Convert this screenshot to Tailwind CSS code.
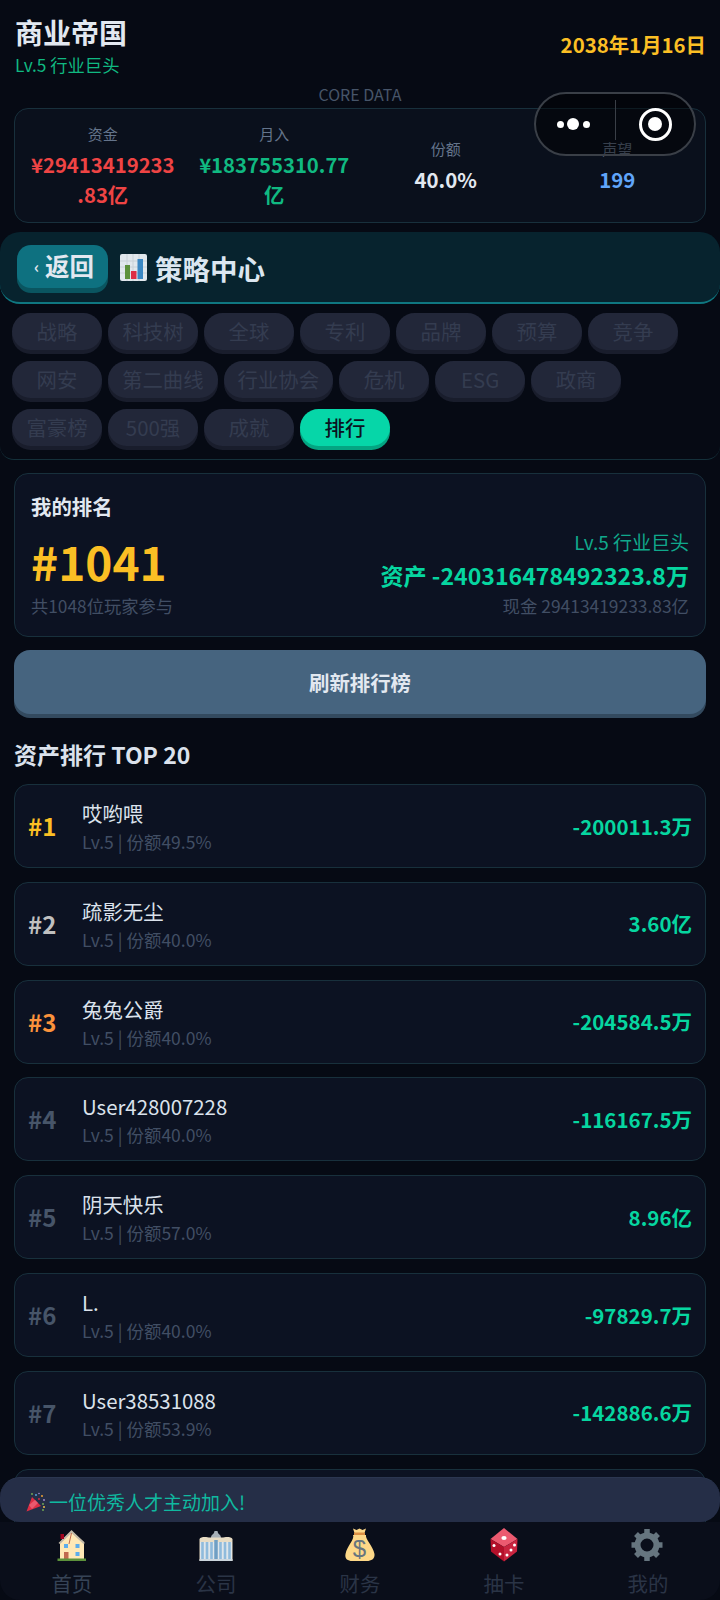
<!DOCTYPE html>
<html lang="zh">
  <head>
    <meta charset="UTF-8" />
    <meta name="viewport" content="width=device-width, initial-scale=1.0" />
    <title>商业帝国</title>
    <script src="https://cdn.jsdelivr.net/npm/@tailwindcss/browser@4"></script>
  </head>
  <body class="bg-[#060a14]">
    <div class="relative w-[720px] h-[1600px] overflow-hidden bg-[#060a14] font-['Noto_Sans_CJK_SC','Noto_Sans',sans-serif] text-[#e2e8f0]">
      <!-- 顶部 -->
      <header class="flex items-start justify-between h-[84px] pt-[13px] pl-[15px] pr-[14px]">
        <div>
          <h1 class="text-[28px] leading-[38px] font-semibold text-[#e2e8f0]">商业帝国</h1>
          <p class="mt-[2px] text-[17.3px] leading-[24px] text-[#10b981]">Lv.5 行业巨头</p>
        </div>
        <div class="mt-[17px] text-[20.4px] leading-[28px] font-semibold text-[#fbbf24]">2038年1月16日</div>
      </header>
      <p class="text-center text-[16px] leading-[20px] text-[#475569]">CORE DATA</p>

      <!-- 核心数据 -->
      <section class="mx-[14px] mt-[4px] h-[115px] grid grid-cols-4 items-center px-[2px] rounded-[14px] border border-[#18303c] bg-[#0a101c]">
        <div class="text-center">
          <p class="text-[15px] leading-[22px] text-[#64748b]">资金</p>
          <p class="text-[20.3px] leading-[30px] mt-[4px] font-semibold text-[#ef4444]">¥29413419233<br />.83亿</p>
        </div>
        <div class="text-center">
          <p class="text-[15px] leading-[22px] text-[#64748b]">月入</p>
          <p class="text-[20.3px] leading-[30px] mt-[4px] font-semibold text-[#10b981]">¥183755310.77<br />亿</p>
        </div>
        <div class="text-center">
          <p class="text-[15px] leading-[22px] text-[#64748b]">份额</p>
          <p class="text-[20.4px] leading-[30px] mt-[4px] font-semibold text-[#e2e8f0]">40.0%</p>
        </div>
        <div class="text-center">
          <p class="text-[15px] leading-[22px] text-[#64748b]">声望</p>
          <p class="text-[20.4px] leading-[30px] mt-[4px] font-semibold text-[#60a5fa]">199</p>
        </div>
      </section>

      <!-- 策略中心标题 -->
      <div class="mt-[9px] h-[72px] flex items-center gap-[12px] pl-[17px] rounded-[20px] border-b-2 border-[#0f7781] bg-[#07232e]">
        <button class="flex items-center justify-center gap-[6px] w-[91px] h-[43px] pl-[3px] mt-[-2px] rounded-[14px] bg-[#0e7180] shadow-[0_5px_0_#0a5560] text-[24.5px] font-semibold text-[#e2e8f0]"><span class="text-[16px]">‹</span>返回</button>
        <div class="flex items-center gap-[8px]">
          <svg width="27" height="27" viewBox="0 0 27 27">
            <rect width="27" height="27" rx="2" fill="#e1e8ed" />
            <path d="M0 7h27M0 13h27M0 19h27M7 0v27M13 0v27M19 0v27" stroke="#c9d2d8" stroke-width="1" />
            <rect x="5" y="11" width="5" height="14" fill="#5c913b" />
            <rect x="11" y="17" width="5.5" height="8" fill="#dd2e44" />
            <rect x="17.5" y="5" width="5.5" height="20" fill="#3b88c3" />
          </svg>
          <h2 class="pt-[3px] text-[27.5px] font-semibold text-[#dbe6f0]">策略中心</h2>
        </div>
      </div>

      <!-- 标签 -->
      <nav class="px-[12px] pt-[9px] pb-[13px] border-b border-[#14303a] rounded-b-[14px] flex flex-wrap gap-x-[6px] gap-y-[11px] text-[20.4px] leading-[37px] text-[#343c50]">
        <a class="min-w-[90px] px-[14px] text-center rounded-[19px] bg-[#222739] shadow-[0_4px_0_#191d2c]">战略</a>
        <a class="min-w-[90px] px-[14px] text-center rounded-[19px] bg-[#222739] shadow-[0_4px_0_#191d2c]">科技树</a>
        <a class="min-w-[90px] px-[14px] text-center rounded-[19px] bg-[#222739] shadow-[0_4px_0_#191d2c]">全球</a>
        <a class="min-w-[90px] px-[14px] text-center rounded-[19px] bg-[#222739] shadow-[0_4px_0_#191d2c]">专利</a>
        <a class="min-w-[90px] px-[14px] text-center rounded-[19px] bg-[#222739] shadow-[0_4px_0_#191d2c]">品牌</a>
        <a class="min-w-[90px] px-[14px] text-center rounded-[19px] bg-[#222739] shadow-[0_4px_0_#191d2c]">预算</a>
        <a class="min-w-[90px] px-[14px] text-center rounded-[19px] bg-[#222739] shadow-[0_4px_0_#191d2c]">竞争</a>
        <a class="min-w-[90px] px-[14px] text-center rounded-[19px] bg-[#222739] shadow-[0_4px_0_#191d2c]">网安</a>
        <a class="min-w-[90px] px-[14px] text-center rounded-[19px] bg-[#222739] shadow-[0_4px_0_#191d2c]">第二曲线</a>
        <a class="min-w-[90px] px-[14px] text-center rounded-[19px] bg-[#222739] shadow-[0_4px_0_#191d2c]">行业协会</a>
        <a class="min-w-[90px] px-[14px] text-center rounded-[19px] bg-[#222739] shadow-[0_4px_0_#191d2c]">危机</a>
        <a class="min-w-[90px] px-[14px] text-center rounded-[19px] bg-[#222739] shadow-[0_4px_0_#191d2c]">ESG</a>
        <a class="min-w-[90px] px-[14px] text-center rounded-[19px] bg-[#222739] shadow-[0_4px_0_#191d2c]">政商</a>
        <a class="min-w-[90px] px-[14px] text-center rounded-[19px] bg-[#222739] shadow-[0_4px_0_#191d2c]">富豪榜</a>
        <a class="min-w-[90px] px-[14px] text-center rounded-[19px] bg-[#222739] shadow-[0_4px_0_#191d2c]">500强</a>
        <a class="min-w-[90px] px-[14px] text-center rounded-[19px] bg-[#222739] shadow-[0_4px_0_#191d2c]">成就</a>
        <a class="min-w-[90px] px-[14px] text-center rounded-[19px] bg-[#06d6a8] shadow-[0_4px_0_#04a582] text-[#0b1220] font-medium">排行</a>
      </nav>

      <main class="px-[14px] pt-[13px]">
        <!-- 我的排名 -->
        <section class="h-[164px] px-[16px] pt-[18px] rounded-[14px] border border-[#18303c] bg-[#0c1222]">
          <h3 class="text-[20.4px] leading-[28px] font-semibold text-[#e2e8f0]">我的排名</h3>
          <div class="flex items-end justify-between mt-[8px]">
            <div>
              <p class="text-[46px] leading-[66px] font-bold text-[#fbbf24]">#1041</p>
              <p class="text-[17.3px] leading-[24px] text-[#414e64]">共1048位玩家参与</p>
            </div>
            <div class="text-right">
              <p class="text-[19px] leading-[24px] text-[#10a88c]">Lv.5 行业巨头</p>
              <p class="text-[23.1px] leading-[36px] mt-[3px] font-semibold text-[#06d6a0]">资产 -240316478492323.8万</p>
              <p class="text-[17.4px] leading-[24px] mt-[1px] text-[#414e64]">现金 29413419233.83亿</p>
            </div>
          </div>
        </section>

        <button class="block w-full h-[64px] mt-[13px] rounded-[16px] bg-[#46647f] shadow-[0_4px_0_#334a5f] text-[20.4px] font-semibold text-[#e2e8f0]">刷新排行榜</button>

        <h3 class="mt-[22px] text-[23px] leading-[36px] font-semibold text-[#dbe2ec]">资产排行 TOP 20</h3>

        <!-- 排行列表 -->
        <ul class="mt-[12px] flex flex-col gap-[13.8px]">
          <li class="flex items-center h-[84px] px-[13px] rounded-[14px] border border-[#18303c] bg-[#0c1222]">
            <span class="w-[54px] text-[24px] font-bold text-[#fbbf24]">#1</span>
            <div class="flex-1 pt-[3px]">
              <p class="text-[20.4px] leading-[28px] text-[#dbe2ec]">哎哟喂</p>
              <p class="text-[17.5px] leading-[29px] text-[#414e64]">Lv.5 | 份额49.5%</p>
            </div>
            <span class="text-[20.5px] font-semibold text-[#06d6a0]">-200011.3万</span>
          </li>
          <li class="flex items-center h-[84px] px-[13px] rounded-[14px] border border-[#18303c] bg-[#0c1222]">
            <span class="w-[54px] text-[24px] font-bold text-[#c0c0c0]">#2</span>
            <div class="flex-1 pt-[3px]">
              <p class="text-[20.4px] leading-[28px] text-[#dbe2ec]">疏影无尘</p>
              <p class="text-[17.5px] leading-[29px] text-[#414e64]">Lv.5 | 份额40.0%</p>
            </div>
            <span class="text-[20.5px] font-semibold text-[#06d6a0]">3.60亿</span>
          </li>
          <li class="flex items-center h-[84px] px-[13px] rounded-[14px] border border-[#18303c] bg-[#0c1222]">
            <span class="w-[54px] text-[24px] font-bold text-[#fb923c]">#3</span>
            <div class="flex-1 pt-[3px]">
              <p class="text-[20.4px] leading-[28px] text-[#dbe2ec]">兔兔公爵</p>
              <p class="text-[17.5px] leading-[29px] text-[#414e64]">Lv.5 | 份额40.0%</p>
            </div>
            <span class="text-[20.5px] font-semibold text-[#06d6a0]">-204584.5万</span>
          </li>
          <li class="flex items-center h-[84px] px-[13px] rounded-[14px] border border-[#18303c] bg-[#0c1222]">
            <span class="w-[54px] text-[24px] font-bold text-[#475569]">#4</span>
            <div class="flex-1 pt-[3px]">
              <p class="text-[20.4px] leading-[28px] text-[#dbe2ec]">User428007228</p>
              <p class="text-[17.5px] leading-[29px] text-[#414e64]">Lv.5 | 份额40.0%</p>
            </div>
            <span class="text-[20.5px] font-semibold text-[#06d6a0]">-116167.5万</span>
          </li>
          <li class="flex items-center h-[84px] px-[13px] rounded-[14px] border border-[#18303c] bg-[#0c1222]">
            <span class="w-[54px] text-[24px] font-bold text-[#475569]">#5</span>
            <div class="flex-1 pt-[3px]">
              <p class="text-[20.4px] leading-[28px] text-[#dbe2ec]">阴天快乐</p>
              <p class="text-[17.5px] leading-[29px] text-[#414e64]">Lv.5 | 份额57.0%</p>
            </div>
            <span class="text-[20.5px] font-semibold text-[#06d6a0]">8.96亿</span>
          </li>
          <li class="flex items-center h-[84px] px-[13px] rounded-[14px] border border-[#18303c] bg-[#0c1222]">
            <span class="w-[54px] text-[24px] font-bold text-[#475569]">#6</span>
            <div class="flex-1 pt-[3px]">
              <p class="text-[20.4px] leading-[28px] text-[#dbe2ec]">L.</p>
              <p class="text-[17.5px] leading-[29px] text-[#414e64]">Lv.5 | 份额40.0%</p>
            </div>
            <span class="text-[20.5px] font-semibold text-[#06d6a0]">-97829.7万</span>
          </li>
          <li class="flex items-center h-[84px] px-[13px] rounded-[14px] border border-[#18303c] bg-[#0c1222]">
            <span class="w-[54px] text-[24px] font-bold text-[#475569]">#7</span>
            <div class="flex-1 pt-[3px]">
              <p class="text-[20.4px] leading-[28px] text-[#dbe2ec]">User38531088</p>
              <p class="text-[17.5px] leading-[29px] text-[#414e64]">Lv.5 | 份额53.9%</p>
            </div>
            <span class="text-[20.5px] font-semibold text-[#06d6a0]">-142886.6万</span>
          </li>
          <li class="h-[84px] rounded-[14px] border border-[#18303c] bg-[#0c1222]"></li>
        </ul>
      </main>

      <!-- 小程序胶囊 -->
      <div class="absolute left-[534px] top-[92px] w-[162px] h-[64px] flex items-center rounded-[32px] border-2 border-[#3a3f47] bg-black/45">
        <div class="flex items-center justify-center gap-[3.5px] w-[79px] pr-[5px]">
          <span class="w-[7px] h-[7px] rounded-full bg-white"></span>
          <span class="w-[12px] h-[12px] rounded-full bg-white"></span>
          <span class="w-[7px] h-[7px] rounded-full bg-white"></span>
        </div>
        <span class="w-px h-[40px] mt-[-8px] bg-[#3a3f47]"></span>
        <div class="flex flex-1 items-center justify-center">
          <span class="flex items-center justify-center w-[33px] h-[33px] rounded-full border-[3px] border-white">
            <span class="w-[14px] h-[14px] rounded-full bg-white"></span>
          </span>
        </div>
      </div>

      <!-- 提示条 -->
      <div class="absolute left-0 right-0 top-[1477px] h-[45px] flex items-center gap-[3px] pl-[26px] rounded-[20px] border-t border-[#2b3650] bg-[#252e47] text-[19px] text-[#10b9a0]">
        <svg width="20" height="20" viewBox="0 0 20 20" class="mt-[4px]">
          <path d="M0.5 19.5 L6 5 L15 14 Z" fill="#dd2e44" />
          <path d="M3 13 L9 8 L12 11 L6 17 Z" fill="#ea596e" />
          <circle cx="6" cy="2" r="0.9" fill="#77b255" /><circle cx="10" cy="3" r="0.9" fill="#55acee" /><circle cx="13" cy="1.5" r="0.8" fill="#aa8dd8" /><circle cx="16" cy="4" r="0.9" fill="#ffac33" /><circle cx="13" cy="7" r="0.9" fill="#dd2e44" /><circle cx="18" cy="8" r="0.9" fill="#aa8dd8" /><circle cx="17" cy="12" r="0.9" fill="#77b255" /><circle cx="18" cy="15" r="0.9" fill="#ffcc4d" /><circle cx="17" cy="18" r="0.9" fill="#77b255" />
        </svg>
        <span class="mt-[4px]">一位优秀人才主动加入!</span>
      </div>

      <!-- 底部导航 -->
      <footer class="absolute left-0 right-0 top-[1522px] h-[78px] grid grid-cols-5 bg-[#0a0e1a] text-[20.4px] text-[#2a3446] rounded-b-[20px]">
        <a class="flex flex-col items-center pt-[6px] text-[#364356]">
          <svg width="34" height="34" viewBox="0 0 34 34">
            <path d="M5 14 L16.5 3 L29 14 V31 H5 Z" fill="#ffe8b6" />
            <path d="M16.5 2 L30 15 L28.5 16 L16.5 5 L5 16 L3.5 15 Z" fill="#c1b8a8" />
            <path d="M16.5 5 L14 16" stroke="#c1694f" stroke-width="1" />
            <rect x="5.5" y="6" width="3.5" height="5" fill="#a0041e" />
            <rect x="9" y="16" width="4" height="4" fill="#5dadec" />
            <rect x="20.5" y="16" width="4" height="4" fill="#5dadec" />
            <rect x="20.5" y="24" width="4" height="4" fill="#5dadec" />
            <rect x="9" y="24" width="4.5" height="7" fill="#c1694f" />
            <rect x="2.5" y="30.5" width="28.5" height="2.5" fill="#5c913b" />
          </svg>
          <span class="leading-[30px] mt-[6px]">首页</span>
        </a>
        <a class="flex flex-col items-center pt-[6px]">
          <svg width="34" height="34" viewBox="0 0 34 34">
            <path d="M12 10 C12 6 15 7 15.5 3 H18.5 C19 7 22 6 22 10 Z" fill="#a7b0b8" />
            <path d="M0.5 33 V11 C2 8 8 9 11 9.5 H23 C26 9 32 8 33.5 11 V33 Z" fill="#e8dcc4" />
            <rect x="1" y="14" width="32" height="19" fill="#dfe6ea" />
            <path d="M3.5 14v17M8 14v17M12.5 14v17M21.5 14v17M26 14v17M30.5 14v17" stroke="#8fbbdc" stroke-width="2.6" />
            <path d="M17 12v19" stroke="#6f9fc4" stroke-width="3.5" />
            <rect x="0.5" y="31" width="33" height="2" fill="#ccd6dd" />
          </svg>
          <span class="leading-[30px] mt-[6px]">公司</span>
        </a>
        <a class="flex flex-col items-center pt-[6px]">
          <svg width="34" height="34" viewBox="0 0 34 34">
            <path d="M10 7 C12 11 4 18 2.5 26 C1.5 31 5 33 9 33 H24 C28 33 32 31 31.5 26 C30 18 22 11 23 7 Z" fill="#fdd888" />
            <path d="M10 0.5 L13.5 2 L16.5 0.5 L19.5 2 L23 0.5 L21.5 5 H11.5 Z" fill="#fdd888" />
            <rect x="11" y="4.5" width="11" height="2.5" fill="#dc8f43" />
            <text x="16.5" y="29" text-anchor="middle" font-size="24" font-family="Liberation Sans" fill="#67757f">$</text>
          </svg>
          <span class="leading-[30px] mt-[6px]">财务</span>
        </a>
        <a class="flex flex-col items-center pt-[6px]">
          <svg width="34" height="34" viewBox="0 0 34 34">
            <path d="M17 0 L30.5 11 L17 19 L3.5 11 Z" fill="#ec5a70" />
            <path d="M3.5 11 L17 19 V33.5 L4 23.5 Z" fill="#b3102a" />
            <path d="M30.5 11 L17 19 V33.5 L30 23.5 Z" fill="#c9243f" />
            <ellipse cx="17" cy="10" rx="2.6" ry="2" fill="#fff" />
            <circle cx="7" cy="17.5" r="1.5" fill="#fff" /><circle cx="13" cy="26" r="1.5" fill="#fff" />
            <circle cx="27.5" cy="17" r="1.5" fill="#fff" /><circle cx="24" cy="22" r="1.5" fill="#fff" /><circle cx="20" cy="27" r="1.5" fill="#fff" />
          </svg>
          <span class="leading-[30px] mt-[6px]">抽卡</span>
        </a>
        <a class="flex flex-col items-center pt-[6px]">
          <svg width="34" height="34" viewBox="0 0 34 34">
            <g fill="none" stroke="#66757f">
              <circle cx="16" cy="17" r="9.5" stroke-width="6" />
              <path d="M16 1v6M16 27v6M0.5 17h6M25.5 17h6M5 6l4.2 4.2M22.8 23.8l4.2 4.2M5 28l4.2-4.2M22.8 10.2l4.2-4.2" stroke-width="5.5" />
            </g>
          </svg>
          <span class="leading-[30px] mt-[6px]">我的</span>
        </a>
      </footer>
    </div>
  </body>
</html>
